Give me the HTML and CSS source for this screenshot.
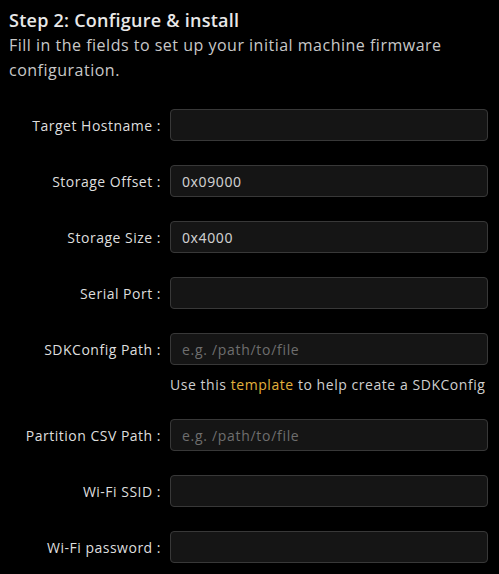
FILE: index.html
```html
<!DOCTYPE html>
<html>
<head>
<meta charset="utf-8">
<link rel="stylesheet" href="styles.css">
</head>
<body>
<div class="page">
  <h2 class="title">Step 2: Configure &amp; install</h2>
  <p class="subtitle">Fill in the fields to set up your initial machine firmware configuration.</p>
  <form class="form">
    <label class="label">Target Hostname :</label>
    <div class="cell"><input class="input" type="text"></div>

    <label class="label">Storage Offset :</label>
    <div class="cell"><input class="input" type="text" value="0x09000"></div>

    <label class="label">Storage Size :</label>
    <div class="cell"><input class="input" type="text" value="0x4000"></div>

    <label class="label">Serial Port :</label>
    <div class="cell"><input class="input" type="text"></div>

    <label class="label">SDKConfig Path :</label>
    <div class="cell">
      <input class="input" type="text" placeholder="e.g. /path/to/file">
      <p class="help">Use this <a class="link">template</a> to help create a SDKConfig</p>
    </div>

    <label class="label">Partition CSV Path :</label>
    <div class="cell"><input class="input" type="text" placeholder="e.g. /path/to/file"></div>

    <label class="label">Wi-Fi SSID :</label>
    <div class="cell"><input class="input" type="text"></div>

    <label class="label">Wi-Fi password :</label>
    <div class="cell"><input class="input" type="password"></div>
  </form>
</div>
</body>
</html>
```

FILE: styles.css
```css
html, body {
  margin: 0;
  padding: 0;
  background: #000;
}
body {
  font-family: "Open Sans", "DejaVu Sans", sans-serif;
  color: #dcdcdc;
}
.page {
  padding: 9px 11px 0 9px;
}
.title {
  margin: 0 0 2px 0;
  font-size: 18px;
  line-height: 22px;
  font-weight: 600;
  letter-spacing: 0.25px;
  color: #e8e8e8;
}
.subtitle {
  margin: 0;
  font-size: 16px;
  line-height: 25px;
  letter-spacing: 0.5px;
  color: #c8c8c8;
}
.form {
  margin-top: 26px;
  display: grid;
  grid-template-columns: 152px 318px;
  column-gap: 9px;
  row-gap: 24px;
}
.label {
  height: 32px;
  display: flex;
  align-items: center;
  justify-content: flex-end;
  font-size: 14px;
  letter-spacing: 0.5px;
  color: #dedede;
}
.cell {
  display: flex;
  flex-direction: column;
}
.input {
  box-sizing: border-box;
  height: 32px;
  width: 100%;
  margin: 0;
  padding: 0 11px;
  background: #151515;
  border: 1px solid #383838;
  border-radius: 4px;
  color: #cfcfcf;
  font-family: "Noto Sans", sans-serif;
  font-size: 14px;
  letter-spacing: 0.6px;
  outline: none;
}
.input::placeholder {
  color: #6e6e6e;
  font-family: "Open Sans", sans-serif;
  letter-spacing: 0.7px;
}
.help {
  margin: 10px 0 0 0;
  font-size: 14px;
  line-height: 20px;
  letter-spacing: 0.55px;
  color: #cfcfcf;
}
.link {
  color: #e2b13c;
}
```
